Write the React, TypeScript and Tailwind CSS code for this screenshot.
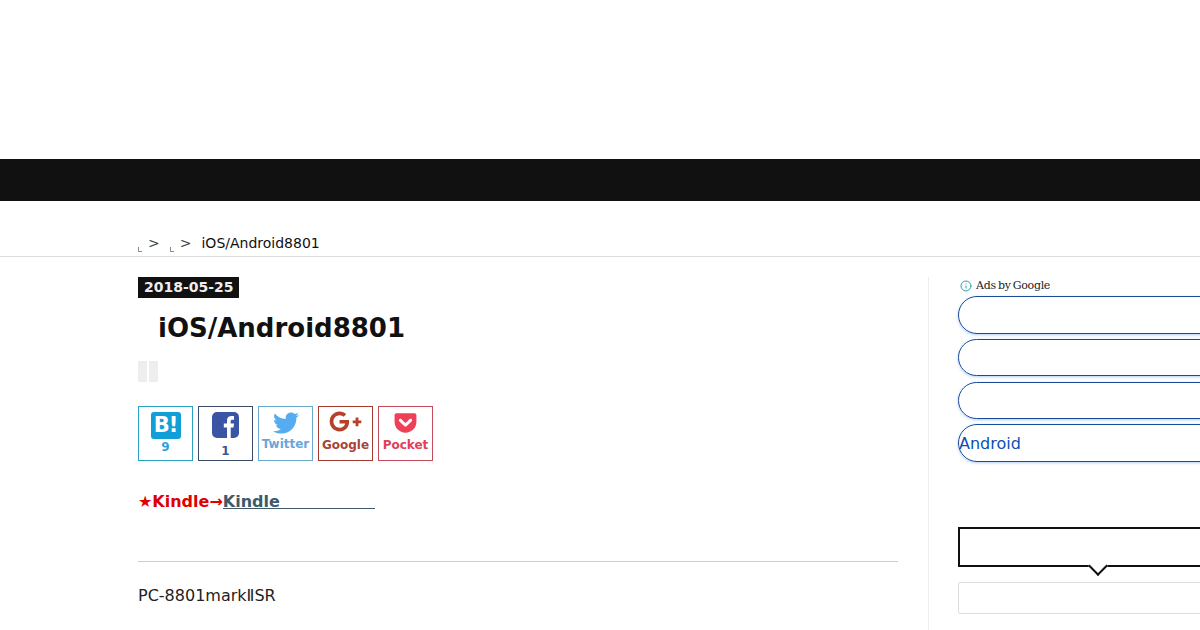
import type { ReactNode } from "react"
import { Info } from "lucide-react"
import { FaTwitter, FaGooglePlusG, FaGetPocket } from "react-icons/fa"

function BrokenMark() {
  return (
    <svg width="5" height="6" viewBox="0 0 5 6" className="mr-[5px] mt-[6px] shrink-0">
      <path d="M0.5 1v4.5H4" fill="none" stroke="#888" strokeWidth="1" />
    </svg>
  )
}

function ShareBox({ border, color, icon, label, labelClass }: { border: string; color: string; icon: ReactNode; label: string; labelClass?: string }) {
  return (
    <div className={`flex h-[55px] w-[55px] flex-col items-center border text-[12px] font-bold leading-none ${border} ${color}`}>
      {icon}
      <span className={labelClass}>{label}</span>
    </div>
  )
}

function FacebookIcon() {
  return (
    <svg width="27" height="26" viewBox="0 0 27 26" className="mt-[5px] shrink-0">
      <rect width="27" height="26" rx="5" fill="#3b55a5" />
      <path d="M15 26V15.5h-3.2v-4H15V8.6C15 5.4 17 4 19.5 4c1.2 0 2.2.1 2.5.1v3.6h-1.7c-1.4 0-1.6.7-1.6 1.6v2.2h3.3l-.5 4h-2.8V26z" fill="#fff" />
    </svg>
  )
}

const pills = ["", "", "", "Android"]

export default function App() {
  return (
    <div className="h-[630px] w-[1200px] overflow-hidden bg-white text-[#111] font-['DejaVu_Sans',sans-serif]">
      <div className="h-[159px]" />
      <div className="h-[42px] bg-[#111]" />

      {/* breadcrumb */}
      <div className="flex h-[56px] items-end border-b border-[#ddd] pb-[4px] pl-[138px] text-[14px] leading-[17px]">
        <BrokenMark />
        <span className="mr-[10px] text-[#444]">&gt;</span>
        <BrokenMark />
        <span className="mr-[10px] text-[#444]">&gt;</span>
        <span>iOS/Android8801</span>
      </div>

      <div className="flex pl-[138px] pt-[20px]">
        {/* main */}
        <div className="w-[760px] shrink-0">
          <span className="block w-[101px] bg-[#111] pl-[6px] py-[2px] text-[14px] font-bold leading-[17px] text-[#eee]">2018-05-25</span>
          <h1 className="mt-[13px] pl-[20px] text-[26px] font-bold leading-[34px]">iOS/Android8801</h1>
          <div className="mt-[16px] flex h-[21px] gap-[2px]">
            <div className="w-[9px] bg-[#eee]" />
            <div className="w-[9px] bg-[#eee]" />
          </div>

          <div className="mt-[24px] flex gap-[5px]">
            <ShareBox
              border="border-[#2ba3c4]"
              color="text-[#2aa3d8]"
              icon={
                <span className="mt-[5px] flex h-[27px] w-[30px] items-center justify-center rounded-[3px] bg-[#119fd8] text-[21px] font-bold leading-none tracking-[-1px] text-white">
                  B!
                </span>
              }
              label="9"
              labelClass="mt-[2px]"
            />
            <ShareBox
              border="border-[#3a4a6a]"
              color="text-[#3f5596]"
              icon={<FacebookIcon />}
              label="1"
              labelClass="mt-[7px]"
            />
            <ShareBox
              border="border-[#6aa9cf]"
              color="text-[#6aa6dc]"
              icon={<FaTwitter className="mt-[3px] text-[26px] text-[#55acee]" />}
              label="Twitter"
              labelClass="mt-[2px]"
            />
            <ShareBox
              border="border-[#a33a30]"
              color="text-[#a8443a]"
              icon={<FaGooglePlusG className="-mt-[2px] text-[33px] text-[#b8402a]" />}
              label="Google"
              labelClass="mt-[1px]"
            />
            <ShareBox
              border="border-[#c44a5c]"
              color="text-[#e0405a]"
              icon={<FaGetPocket className="mt-[3px] text-[25px] text-[#ee4056]" />}
              label="Pocket"
              labelClass="mt-[4px]"
            />
          </div>

          <p className="mt-[31px] flex items-start text-[16px] font-bold leading-[19px] text-[#e00000]">
            <span>★Kindle→</span>
            <a className="mt-[2px] w-[152px] border-b border-[#3d5a6c] pt-[1px] leading-[13px] text-[#3d5a6c]">Kindle</a>
          </p>

          <hr className="mt-[50px] border-[#ccc]" />
          <p className="mt-[24px] text-[16px] leading-[20px] text-[#222]">PC-8801markⅡSR</p>
        </div>

        {/* sidebar */}
        <div className="ml-[30px] h-[400px] w-[300px] shrink-0 border-l border-[#eee] pl-[29px]">
          <div className="flex h-[19.2px] items-center pb-[2px] pl-[2px] font-['DejaVu_Serif',serif] text-[11px] leading-none tracking-[-0.3px] text-[#222] [word-spacing:-1px]">
            <Info size={12} className="mr-[4px] text-[#2aa5b5]" />
            Ads by Google
          </div>
          <div className="flex flex-col gap-[5.1px]">
            {pills.map((label, i) => (
              <div key={i} className="flex h-[37.6px] items-center rounded-[20px] border border-[#1a4a9a] pt-[1px] text-[16px] text-[#0b4fb3] shadow-[0_1px_3px_rgba(26,115,232,0.35)]">
                {label}
              </div>
            ))}
          </div>
          <div className="relative mt-[65px] h-[40px] w-[280px] border-2 border-[#111]">
            <div className="absolute bottom-[-8px] left-1/2 h-[14px] w-[14px] -translate-x-1/2 rotate-45 border-b-2 border-r-2 border-[#111] bg-white" />
          </div>
          <div className="mt-[15px] h-[32px] rounded-[2px] border border-[#ddd]" />
        </div>
      </div>
    </div>
  )
}
